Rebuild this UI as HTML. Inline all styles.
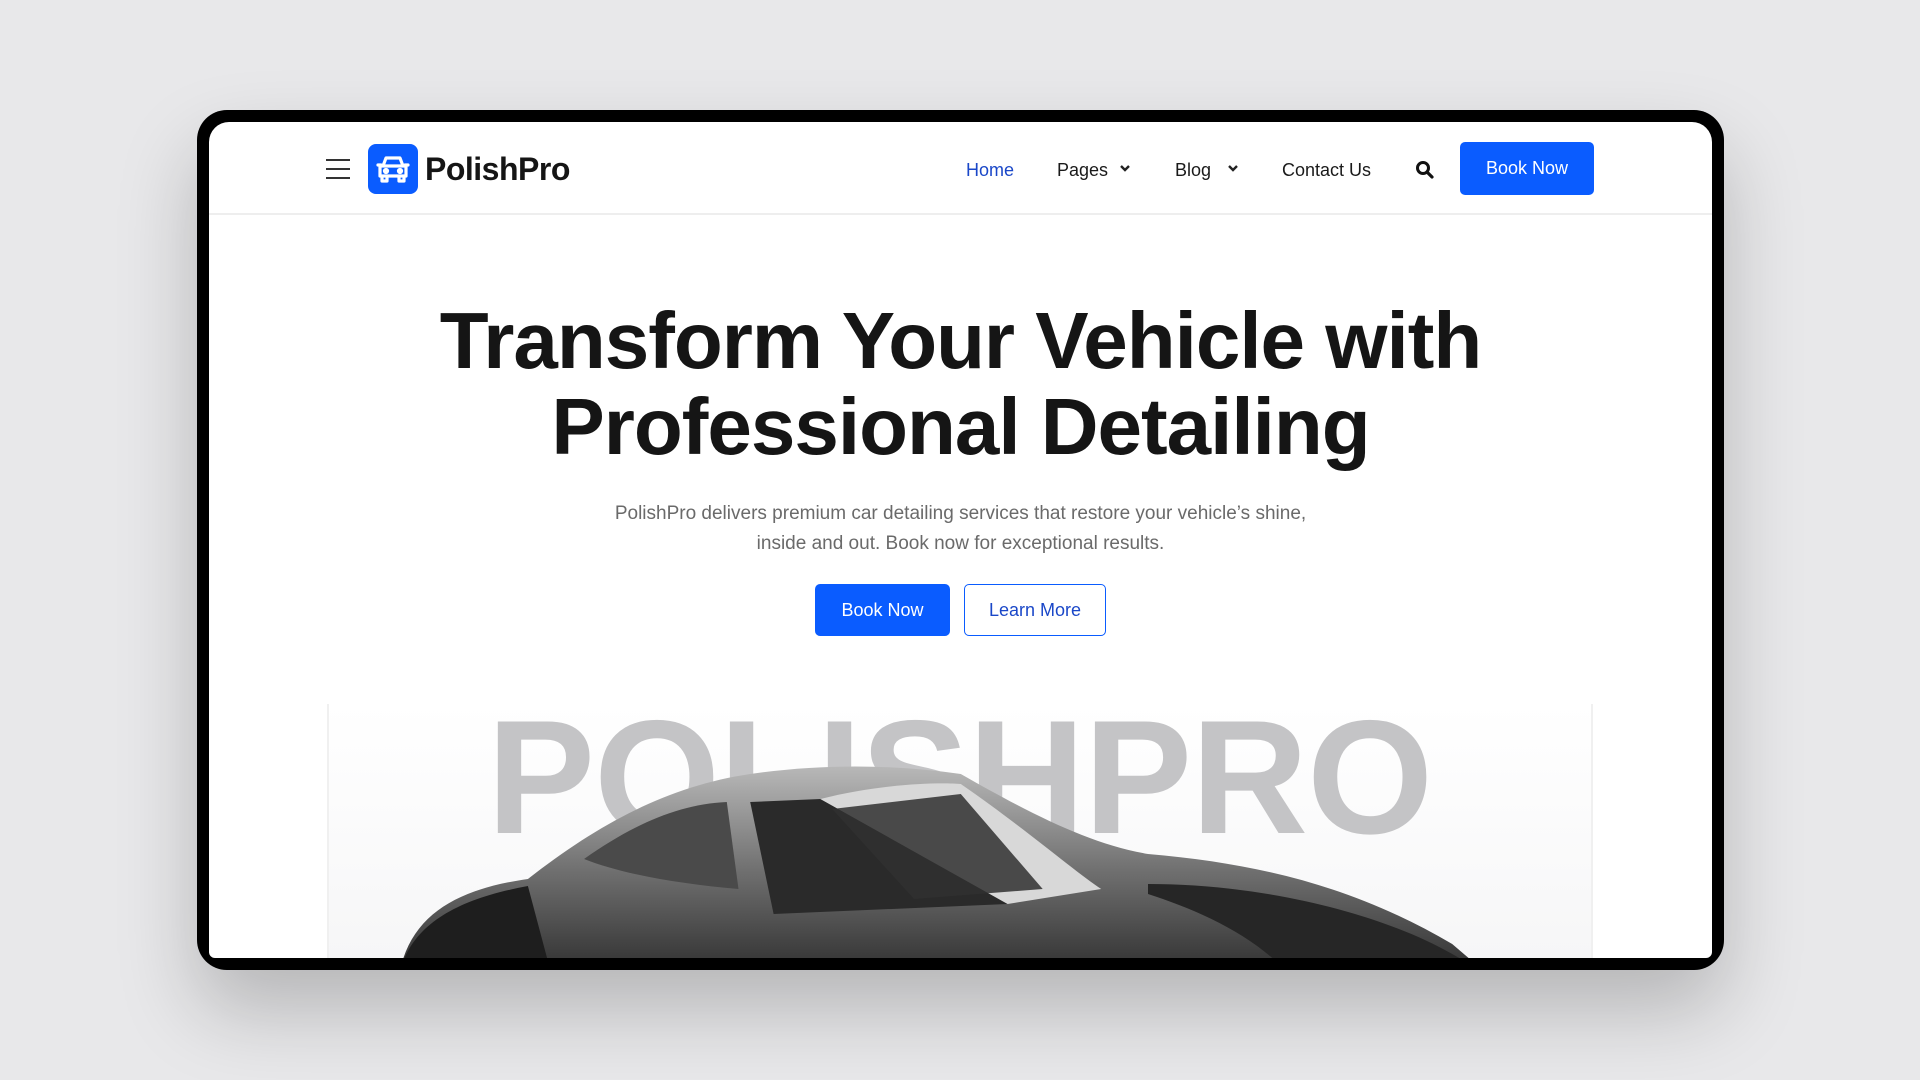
<!DOCTYPE html>
<html><head><meta charset="utf-8"><style>
*{margin:0;padding:0;box-sizing:border-box}
body{width:1920px;height:1080px;background:#e8e8ea;font-family:"Liberation Sans",sans-serif;position:relative;overflow:hidden}
.frame{position:absolute;left:197px;top:110px;width:1527px;height:860px;background:#000;border-radius:30px;box-shadow:0 40px 80px rgba(0,0,0,.22)}
.scr{position:absolute;left:12px;top:12px;width:1503px;height:836px;background:#fff;border-radius:20px 20px 6px 6px;overflow:hidden}
.hdr{position:absolute;left:0;top:0;width:100%;height:93px;border-bottom:2px solid #eee}
.abs{position:absolute}
.nav{font-size:18px;color:#1a1a1a;top:36px;line-height:24px}
.btn{position:absolute;background:#0a5cff;color:#fff;border-radius:5px;font-size:18px;text-align:center}
h1{position:absolute;left:0;width:100%;top:176px;text-align:center;font-size:80px;line-height:86px;font-weight:bold;color:#151515;letter-spacing:-1px}
p.s{position:absolute;left:0;width:100%;top:377px;text-align:center;font-size:19px;line-height:30px;color:#6a6a6a}
</style></head><body>
<div class="frame"><div class="scr">
<div class="hdr">
 <div class="abs" style="left:117px;top:37px;width:24px;height:20px;border-top:2px solid #333;border-bottom:2px solid #333"><div style="margin-top:7px;height:2px;background:#333"></div></div>
 <div class="abs" style="left:159px;top:22px;width:50px;height:50px;background:#0a5cff;border-radius:8px">
  <svg width="50" height="50" viewBox="0 0 50 50" fill="none" stroke="#fff" stroke-width="3.2" stroke-linecap="round" stroke-linejoin="round"><path d="M15 22l3-8h14l3 8M12 22h26v10H12zM14 32v5h5v-5M31 32v5h5v-5M10 21h3M37 21h3"/><circle cx="18" cy="27" r="1.5" fill="#fff"/><circle cx="32" cy="27" r="1.5" fill="#fff"/></svg>
 </div>
 <div class="abs" style="left:216px;top:29px;font-size:32px;font-weight:bold;color:#151515;letter-spacing:-.5px">PolishPro</div>
 <div class="abs nav" style="left:757px;color:#1a47c8">Home</div>
 <div class="abs nav" style="left:848px">Pages</div>
 <svg class="abs" style="left:910px;top:42px" width="12" height="10" viewBox="0 0 12 10"><path d="M2 2l4 4 4-4" stroke="#222" stroke-width="2.4" fill="none"/></svg>
 <div class="abs nav" style="left:966px">Blog</div>
 <svg class="abs" style="left:1018px;top:42px" width="12" height="10" viewBox="0 0 12 10"><path d="M2 2l4 4 4-4" stroke="#222" stroke-width="2.4" fill="none"/></svg>
 <div class="abs nav" style="left:1073px">Contact Us</div>
 <svg class="abs" style="left:1206px;top:38px" width="20" height="20" viewBox="0 0 20 20"><circle cx="8" cy="8" r="5.5" stroke="#111" stroke-width="3" fill="none"/><path d="M12 12l5 5" stroke="#111" stroke-width="3.2" stroke-linecap="round"/></svg>
 <div class="btn" style="left:1251px;top:20px;width:134px;height:53px;line-height:53px">Book Now</div>
</div>
<h1>Transform Your Vehicle with<br>Professional Detailing</h1>
<p class="s">PolishPro delivers premium car detailing services that restore your vehicle’s shine,<br>inside and out. Book now for exceptional results.</p>
<div class="btn" style="left:606px;top:462px;width:135px;height:52px;line-height:52px">Book Now</div>
<div class="abs" style="left:755px;top:462px;width:142px;height:52px;line-height:50px;border:1.5px solid #0a5cff;border-radius:5px;color:#1a47c8;font-size:18px;text-align:center">Learn More</div>
<div class="abs" style="left:118px;top:582px;width:1266px;height:260px;border-left:2px solid #f0f0f0;border-right:2px solid #f0f0f0;background:linear-gradient(#fff,#f6f6f7);overflow:hidden">
 <div class="abs" style="left:158px;top:-6px;font-size:162px;font-weight:bold;color:#c4c4c6;letter-spacing:-1px;line-height:160px">POLISHPRO</div>
 <svg class="abs" style="left:0;top:0" width="1266" height="260" viewBox="0 0 1266 260">
  <defs><linearGradient id="g" x1="0" y1="0" x2="0" y2="1"><stop offset="0" stop-color="#b8b8b8"/><stop offset=".5" stop-color="#707070"/><stop offset="1" stop-color="#303030"/></linearGradient></defs>
  <g transform="translate(0,10) scale(1.17,1)">
  <path d="M60 260 C70 200 110 175 170 165 C230 110 290 72 360 60 C420 50 480 50 540 60 C600 100 650 130 700 140 C800 150 880 175 960 230 L990 260Z" fill="url(#g)"/>
  <path d="M60 260 C70 210 110 185 170 172 L190 260Z" fill="#1e1e1e"/>
  <path d="M218 145 C260 110 300 90 340 88 L350 175 C300 170 250 160 218 145Z" fill="#4a4a4a"/>
  <path d="M360 88 L420 85 L580 190 L380 200Z" fill="#2a2a2a"/>
  <path d="M420 85 C470 70 520 68 540 70 C590 110 640 160 660 175 L580 190Z" fill="#d8d8d8"/>
  <path d="M430 95 L540 80 L610 175 L500 185Z" fill="#303030" opacity=".85"/>
  <path d="M700 170 C800 170 900 200 960 240 L990 260 L820 260 C790 220 740 195 700 180Z" fill="#262626"/>
  </g>
 </svg>
</div>
</div></div>
</body></html>
